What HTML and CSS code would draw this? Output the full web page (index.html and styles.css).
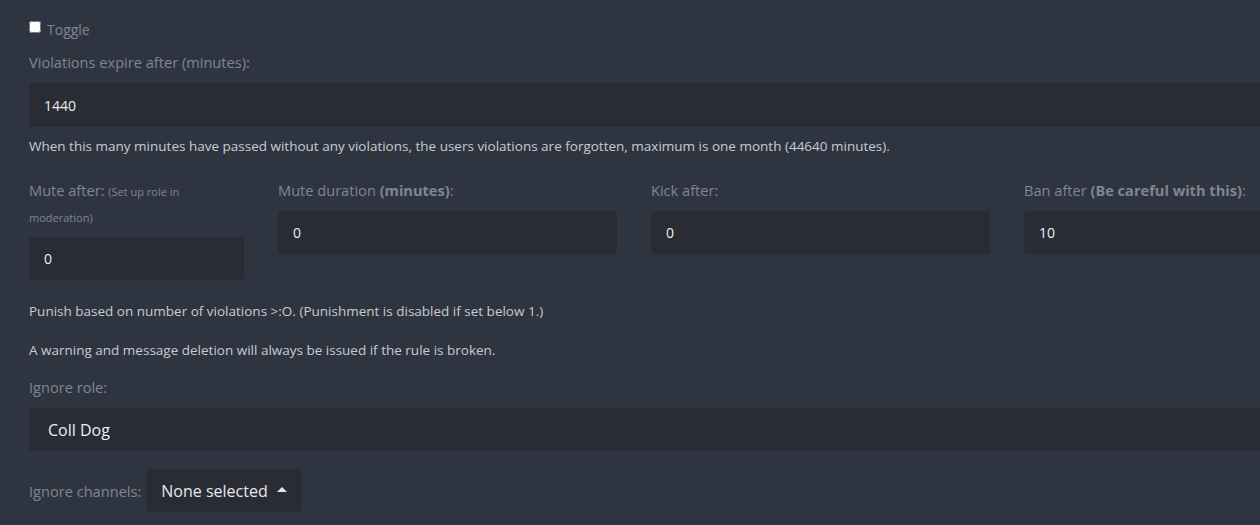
FILE: index.html
```html
<!DOCTYPE html>
<html>
<head>
<meta charset="utf-8">
<link rel="stylesheet" href="styles.css">
</head>
<body>
<div class="page">
  <label class="toggle"><input type="checkbox" class="check"><span>Toggle</span></label>

  <div class="field">
    <label class="lbl">Violations expire after (minutes):</label>
    <div class="input wide">1440</div>
  </div>
  <p class="help first">When this many minutes have passed without any violations, the users violations are forgotten, maximum is one month (44640 minutes).</p>

  <div class="grid">
    <div class="col">
      <label class="lbl">Mute after: <small>(Set up role in moderation)</small></label>
      <div class="input">0</div>
    </div>
    <div class="col">
      <label class="lbl">Mute duration <b>(minutes)</b>:</label>
      <div class="input">0</div>
    </div>
    <div class="col">
      <label class="lbl">Kick after:</label>
      <div class="input">0</div>
    </div>
    <div class="col">
      <label class="lbl">Ban after <b>(Be careful with this)</b>:</label>
      <div class="input">10</div>
    </div>
  </div>

  <p class="help">Punish based on number of violations &gt;:O. (Punishment is disabled if set below 1.)</p>
  <p class="help last">A warning and message deletion will always be issued if the rule is broken.</p>

  <div class="field">
    <label class="lbl">Ignore role:</label>
    <div class="input wide select">Coll Dog</div>
  </div>

  <div class="channels">
    <label class="lbl">Ignore channels:</label>
    <button class="dropdown">None selected <span class="caret"></span></button>
  </div>
</div>
</body>
</html>
```
FILE: styles.css
```css
html, body {
  margin: 0;
  padding: 0;
  overflow: hidden;
  background: #2f3540;
  font-family: "Open Sans", "Liberation Sans", sans-serif;
}
.page {
  width: 1400px;
  padding: 17px 0 0 29px;
  box-sizing: border-box;
}
.toggle {
  display: flex;
  align-items: center;
  height: 24px;
  font-size: 14px;
  color: #80868f;
}
.check {
  margin: 0 6px 0 0;
  width: 12px;
  height: 12px;
  position: relative;
  top: -2px;
}
.field {
  margin-top: 8px;
}
.lbl {
  display: block;
  font-size: 14.6px;
  line-height: 26px;
  color: #80868f;
  margin-bottom: 8px;
}
.lbl small {
  font-size: 11px;
  line-height: 1;
}
.lbl b {
  font-weight: 700;
}
.input {
  height: 44px;
  box-sizing: border-box;
  background: #292c35;
  border-radius: 4px;
  color: #eceef0;
  font-size: 14px;
  display: flex;
  align-items: center;
  padding-left: 15px;
}
.wide {
  width: 1300px;
}
.select {
  font-size: 16px;
  padding-left: 19px;
  height: 43px;
}
.help {
  margin: 0;
  font-size: 13.5px;
  line-height: 20px;
  color: #c8cbd0;
  margin-bottom: 19px;
}
.help.first {
  margin-top: 9px;
  margin-bottom: 21px;
}
.help.last {
  margin-bottom: 14px;
}
.grid {
  display: grid;
  grid-template-columns: 215px 339px 339px 339px;
  column-gap: 34px;
  align-items: start;
  margin-bottom: 21px;
}
.grid .input {
  height: 43px;
}
.channels {
  display: flex;
  align-items: center;
  margin-top: 18px;
}
.channels .lbl {
  margin: 0 5px 0 0;
}
.dropdown {
  height: 43px;
  background: #292c35;
  border: none;
  border-radius: 4px;
  color: #e6e8eb;
  font-family: inherit;
  font-size: 16px;
  padding: 0 15px;
  display: flex;
  align-items: center;
}
.caret {
  display: inline-block;
  margin-left: 9px;
  border-left: 5px solid transparent;
  border-right: 5px solid transparent;
  border-bottom: 5px solid #e6e8eb;
  position: relative;
  top: -1px;
}
```
